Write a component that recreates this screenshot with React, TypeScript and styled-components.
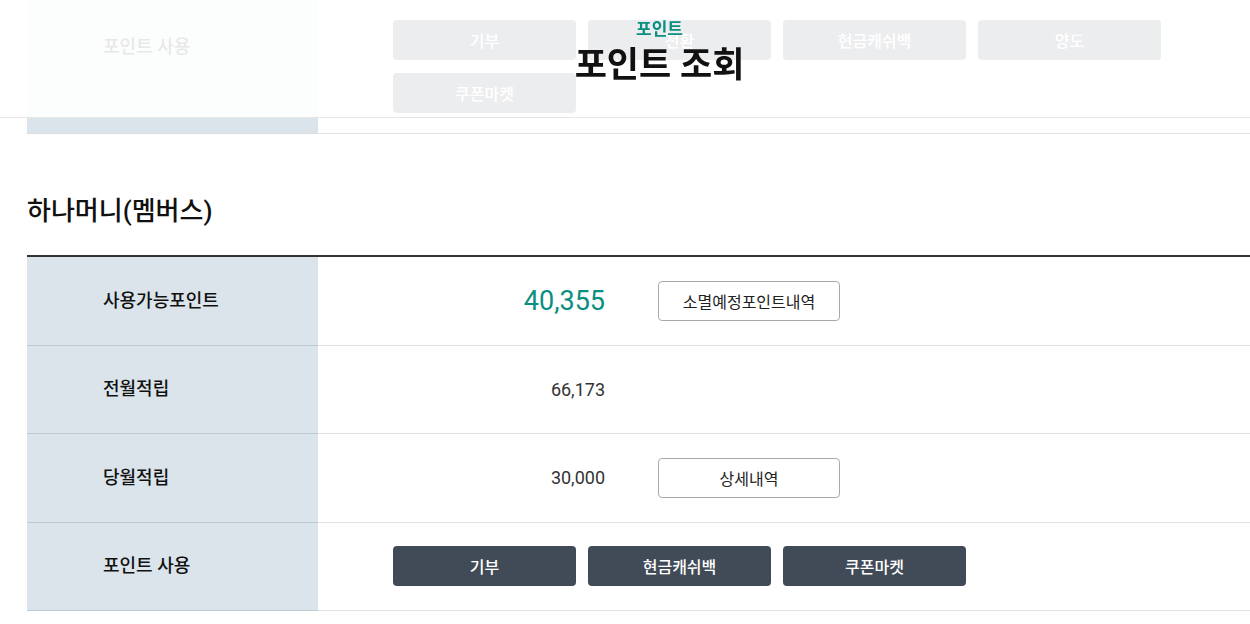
import { ReactElement } from 'react';
import styled, { createGlobalStyle } from 'styled-components';

const GlobalStyle = createGlobalStyle`
  html, body {
    margin: 0;
    padding: 0;
    background: #fff;
    font-family: Roboto, 'Noto Sans CJK KR', sans-serif;
    color: #222;
    overflow: hidden;
  }
`;

const TitleBar = styled.header`
  position: fixed;
  top: 0;
  left: 0;
  right: 0;
  height: 117px;
  z-index: 10;
  padding-left: 69px;
  box-sizing: content-box;
  display: flex;
  flex-direction: column;
  align-items: center;
  background-color: rgba(255, 255, 255, 0.9);
  border-bottom: 1px solid #e6e6e6;
`;

const TitleSub = styled.span`
  margin-top: 17px;
  font-size: 17px;
  line-height: 24px;
  font-weight: 700;
  color: #0a8f80;
`;

const TitleMain = styled.h1`
  margin: 3px 0 0;
  font-size: 35px;
  line-height: 44px;
  font-weight: 700;
  color: #111;
`;

const Page = styled.main`
  padding-left: 27px;
`;

const Table = styled.div<{ lined?: boolean }>`
  display: flex;
  flex-direction: column;
  border-top: ${({ lined }) => (lined ? '2px solid #333' : 'none')};
`;

const Row = styled.div<{ tall?: boolean }>`
  display: flex;
  min-height: ${({ tall }) => (tall ? '134px' : '88.5px')};
`;

const LabelCell = styled.div<{ faded?: boolean }>`
  flex: 0 0 291px;
  box-sizing: border-box;
  display: flex;
  align-items: ${({ faded }) => (faded ? 'flex-start' : 'center')};
  padding-left: 76px;
  padding-top: ${({ faded }) => (faded ? '34px' : '0')};
  background: #dae4ea;
  border-bottom: 1px solid ${({ faded }) => (faded ? '#dddddd' : '#bccbd4')};
  font-size: 18px;
  line-height: 26px;
  font-weight: 500;
  color: #111;
`;

const ValueCell = styled.div`
  flex: 1;
  display: flex;
  align-items: center;
  padding-left: 75px;
  border-bottom: 1px solid #e0e0e0;
`;

const Amount = styled.span<{ big?: boolean }>`
  width: 212px;
  text-align: right;
  font-size: ${({ big }) => (big ? '27px' : '18px')};
  color: ${({ big }) => (big ? '#0a8f80' : '#333')};
`;

const OutlineButton = styled.button`
  margin-left: 53px;
  width: 182px;
  height: 40px;
  border: 1px solid #a9a9a9;
  border-radius: 4px;
  background: #fff;
  font-family: inherit;
  font-size: 16px;
  color: #222;
  cursor: pointer;
`;

const ButtonGroup = styled.div`
  display: flex;
  flex-wrap: wrap;
  gap: 13px 12px;
  max-width: 780px;
`;

const DarkButton = styled.button`
  width: 183px;
  height: 40px;
  border: none;
  border-radius: 4px;
  background: #414b57;
  font-family: inherit;
  font-size: 16px;
  font-weight: 500;
  color: #fff;
  cursor: pointer;
`;

const SectionTitle = styled.h2`
  margin: 57px 0 24px;
  font-size: 26px;
  line-height: 40px;
  font-weight: 500;
  color: #111;
`;

interface PointRow {
  label: string;
  amount?: string;
  big?: boolean;
  action?: string;
  uses?: string[];
}

const hanaRows: PointRow[] = [
  { label: '사용가능포인트', amount: '40,355', big: true, action: '소멸예정포인트내역' },
  { label: '전월적립', amount: '66,173' },
  { label: '당월적립', amount: '30,000', action: '상세내역' },
  { label: '포인트 사용', uses: ['기부', '현금캐쉬백', '쿠폰마켓'] },
];

export default function App(): ReactElement {
  return (
    <>
      <GlobalStyle />
      <TitleBar>
        <TitleSub>포인트</TitleSub>
        <TitleMain>포인트 조회</TitleMain>
      </TitleBar>
      <Page>
        <Table>
          <Row tall>
            <LabelCell faded>포인트 사용</LabelCell>
            <ValueCell>
              <ButtonGroup>
                {['기부', '전환', '현금캐쉬백', '양도', '쿠폰마켓'].map((text) => (
                  <DarkButton key={text}>{text}</DarkButton>
                ))}
              </ButtonGroup>
            </ValueCell>
          </Row>
        </Table>

        <SectionTitle>하나머니(멤버스)</SectionTitle>
        <Table lined>
          {hanaRows.map(({ label, amount, big, action, uses }) => (
            <Row key={label}>
              <LabelCell>{label}</LabelCell>
              <ValueCell>
                {amount && <Amount big={big}>{amount}</Amount>}
                {action && <OutlineButton>{action}</OutlineButton>}
                {uses && (
                  <ButtonGroup>
                    {uses.map((text) => (
                      <DarkButton key={text}>{text}</DarkButton>
                    ))}
                  </ButtonGroup>
                )}
              </ValueCell>
            </Row>
          ))}
        </Table>
      </Page>
    </>
  );
}
